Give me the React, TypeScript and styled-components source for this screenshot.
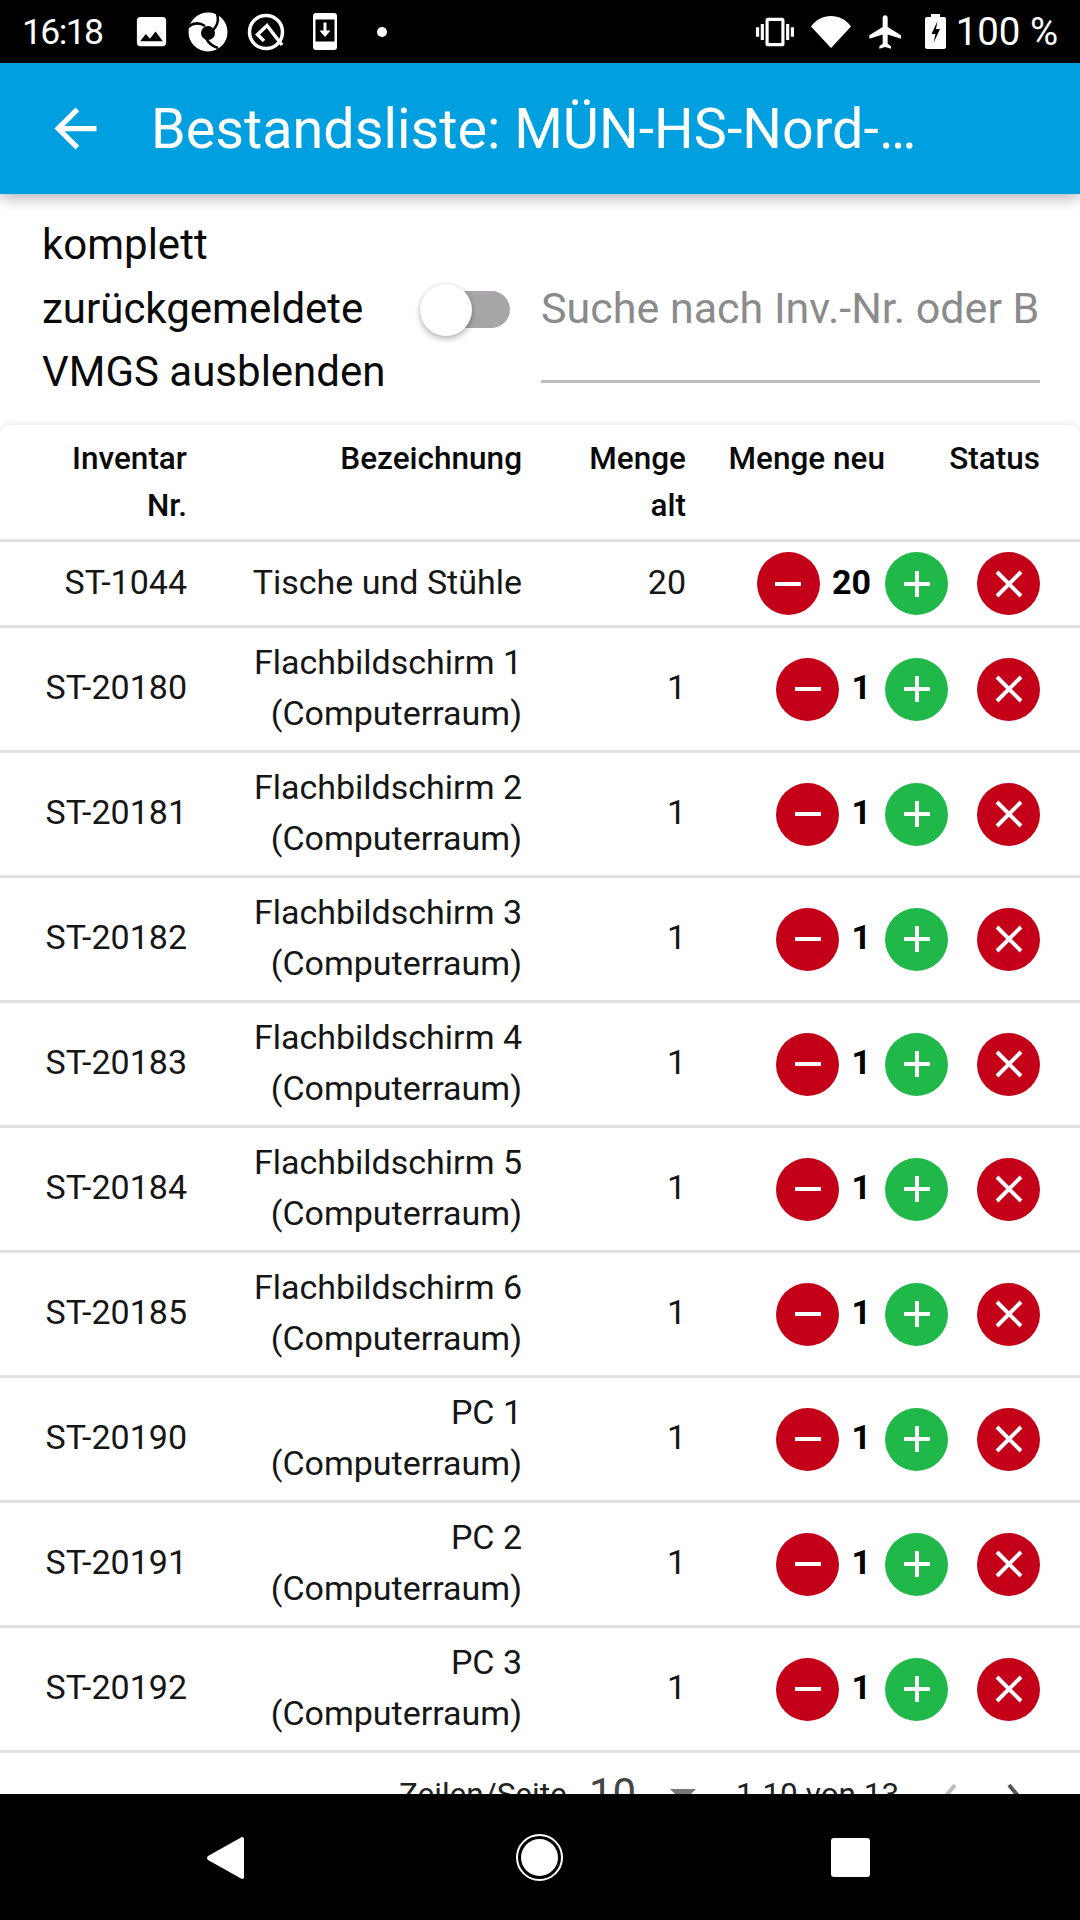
import { createGlobalStyle } from "styled-components";
import styled from "styled-components";

const GlobalStyle = createGlobalStyle`
  html, body {
    margin: 0;
    padding: 0;
    background: #fff;
  }
  * {
    box-sizing: border-box;
  }
`;

const Page = styled.div`
  width: 1080px;
  height: 1920px;
  display: flex;
  flex-direction: column;
  overflow: hidden;
  background: #fff;
  color: #111;
  font-family: Roboto, "Liberation Sans", sans-serif;
`;

const StatusBar = styled.div`
  height: 63px;
  flex: none;
  background: #000;
  color: #fff;
  display: flex;
  align-items: center;
  justify-content: space-between;
  padding: 0 22px 0 22px;
  font-size: 38.4px;
  position: relative;
  z-index: 3;
`;

const StatusGroup = styled.div`
  display: flex;
  align-items: center;
`;

const Clock = styled.span`
  width: 110px;
  font-size: 35.5px;
  letter-spacing: -1.6px;
`;

const Glyph = styled.svg<{ $gap?: number }>`
  display: block;
  flex: none;
  margin-right: ${(p) => p.$gap ?? 0}px;
  fill: #fff;
`;

const AppBar = styled.header`
  height: 131px;
  flex: none;
  background: #009fe0;
  color: #fff;
  display: flex;
  align-items: center;
  padding-left: 44px;
  gap: 44px;
  font-size: 55.7px;
  box-shadow: 0 4px 14px rgba(0, 0, 0, 0.3);
  position: relative;
  z-index: 2;
`;

const Content = styled.main`
  flex: 1;
  min-height: 0;
  overflow: hidden;
`;

const Filters = styled.section`
  height: 231px;
  display: flex;
  padding: 19px 40px 0 42px;
`;

const FilterLabel = styled.div`
  width: 379px;
  font-size: 42px;
  line-height: 63.5px;
  color: #0a0a0a;
`;

const SwitchTrack = styled.div`
  width: 89px;
  height: 37px;
  margin: 78px 31px 0 0;
  border-radius: 19px;
  background: #a8a6a8;
  position: relative;
`;

const SwitchThumb = styled.span`
  position: absolute;
  left: -1px;
  top: -7px;
  width: 52px;
  height: 52px;
  border-radius: 50%;
  background: #fff;
  box-shadow: 0 3px 6px rgba(0, 0, 0, 0.28), 0 0 3px rgba(0, 0, 0, 0.1);
`;

const SearchField = styled.div`
  flex: 1;
  height: 172px;
  margin-top: -2px;
  border-bottom: 3px solid #bdbdbd;
  overflow: hidden;
  white-space: nowrap;
  font-size: 43px;
  line-height: 63.5px;
  padding-top: 66px;
  color: #8b8b8b;
`;

const TableCard = styled.section`
  border-radius: 10px 10px 0 0;
  box-shadow: 0 -1px 6px rgba(0, 0, 0, 0.1);
`;

const Row = styled.div<{ $height: number }>`
  height: ${(p) => p.$height}px;
  display: grid;
  grid-template-columns: 187px 335px 164px 262px 92px;
  align-items: center;
  padding-bottom: 3px;
  border-bottom: 3px solid #e0e0e0;
  text-align: right;
  font-size: 34px;
  line-height: 51px;
`;

const HeaderCell = styled.div<{ $inset?: number }>`
  align-self: start;
  padding-top: 10px;
  padding-right: ${(p) => p.$inset ?? 0}px;
  font-size: 31.5px;
  font-weight: 500;
  line-height: 47px;
  color: #0a0a0a;
`;

const Cell = styled.div`
  color: #161616;
`;

const QtyCell = styled.div`
  display: flex;
  justify-content: flex-end;
  align-items: center;
  margin-top: 3px;
`;

const Qty = styled.span`
  margin: -3px 14px 0 12px;
  font-weight: 700;
  color: #000;
`;

const RoundButton = styled.button<{ $tone: "red" | "green" }>`
  width: 63px;
  height: 63px;
  padding: 0;
  border: none;
  border-radius: 50%;
  display: flex;
  align-items: center;
  justify-content: center;
  flex: none;
  background: ${(p) => (p.$tone === "red" ? "#c40018" : "#21b84a")};
`;

const StatusCell = styled.div`
  display: flex;
  justify-content: flex-end;
  margin-top: 3px;
`;

const ButtonIcon = styled.svg`
  display: block;
  stroke: #fff;
  stroke-width: 4;
  fill: none;
`;

const Pagination = styled.footer`
  height: 120px;
  display: flex;
  align-items: flex-start;
  padding: 23px 0 0 399px;
  font-size: 31.5px;
  color: #222;
`;

const PerPageLabel = styled.span`
  width: 190px;
`;

const PerPageValue = styled.span`
  width: 81px;
  margin-top: -7px;
  font-size: 42px;
  color: #444;
`;

const Caret = styled.span`
  width: 0;
  height: 0;
  margin: 13px 40px 0 0;
  border-left: 13px solid transparent;
  border-right: 13px solid transparent;
  border-top: 13px solid #777;
`;

const PageRange = styled.span`
  width: 207px;
`;

const PageChevron = styled.svg<{ $gap?: number }>`
  display: block;
  margin: 7px ${(p) => p.$gap ?? 0}px 0 0;
  fill: none;
  stroke-width: 4;
`;

const NavBar = styled.nav`
  height: 126px;
  flex: none;
  background: #000;
  display: grid;
  grid-template-columns: 207px 37px 272px 47px 268px 39px;
  align-items: center;
  padding-top: 1px;
`;

const NavHome = styled.span`
  grid-column: 4;
  width: 47px;
  height: 47px;
  border-radius: 50%;
  border: 2px solid #fff;
  padding: 3px;
  display: block;
  &::after {
    content: "";
    display: block;
    width: 100%;
    height: 100%;
    border-radius: 50%;
    background: #fff;
  }
`;

const NavSquare = styled.span`
  grid-column: 6;
  width: 39px;
  height: 39px;
  border-radius: 3px;
  background: #fff;
`;

const NavBack = styled.svg`
  grid-column: 2;
  display: block;
  fill: #fff;
`;

type Item = { id: string; name: string[]; qty: number };

const items: Item[] = [
  { id: "ST-1044", name: ["Tische und Stühle"], qty: 20 },
  { id: "ST-20180", name: ["Flachbildschirm 1", "(Computerraum)"], qty: 1 },
  { id: "ST-20181", name: ["Flachbildschirm 2", "(Computerraum)"], qty: 1 },
  { id: "ST-20182", name: ["Flachbildschirm 3", "(Computerraum)"], qty: 1 },
  { id: "ST-20183", name: ["Flachbildschirm 4", "(Computerraum)"], qty: 1 },
  { id: "ST-20184", name: ["Flachbildschirm 5", "(Computerraum)"], qty: 1 },
  { id: "ST-20185", name: ["Flachbildschirm 6", "(Computerraum)"], qty: 1 },
  { id: "ST-20190", name: ["PC 1", "(Computerraum)"], qty: 1 },
  { id: "ST-20191", name: ["PC 2", "(Computerraum)"], qty: 1 },
  { id: "ST-20192", name: ["PC 3", "(Computerraum)"], qty: 1 },
];

const MinusIcon = () => (
  <ButtonIcon width="28" height="28" viewBox="0 0 28 28">
    <path d="M1 14h26" />
  </ButtonIcon>
);

const PlusIcon = () => (
  <ButtonIcon width="28" height="28" viewBox="0 0 28 28">
    <path d="M1 14h26M14 1v26" />
  </ButtonIcon>
);

const CloseIcon = () => (
  <ButtonIcon width="28" height="28" viewBox="0 0 28 28">
    <path d="M2 2l24 24M26 2L2 26" />
  </ButtonIcon>
);

const ImageGlyph = () => (
  <Glyph width="39" height="39" viewBox="0 0 24 24" $gap={17}>
    <path d="M21 19V5c0-1.100-.9-2-2-2H5c-1.100 0-2 .9-2 2v14c0 1.100.9 2 2 2h14c1.100 0 2-.9 2-2zM8.500 13.500l2.500 3.010L14.500 12l4.500 6H5l3.500-4.500z" />
  </Glyph>
);

const ShutterGlyph = () => (
  <Glyph width="40" height="40" viewBox="0 0 40 40" $gap={19}>
    <circle cx="20" cy="20" r="19.500" />
    <circle cx="20" cy="21" r="7" fill="#000" />
    <path
      d="M29 2c2 6 1 11-4 16M0 15c5-4 11-5 17-1M30 36c-6-2-10-5-12-10"
      fill="none"
      stroke="#000"
      strokeWidth="2.500"
    />
  </Glyph>
);

const RingGlyph = () => (
  <Glyph width="38" height="38" viewBox="0 0 38 38" $gap={28}>
    <circle cx="19" cy="19" r="16.500" fill="none" stroke="#fff" strokeWidth="3.500" />
    <path d="M17 28L10.500 21.500 20 12.500 35 32" fill="none" stroke="#fff" strokeWidth="3.500" />
  </Glyph>
);

const PhoneGlyph = () => (
  <Glyph width="24" height="37" viewBox="0 0 24 37" $gap={40}>
    <rect width="24" height="37" rx="3" />
    <rect x="2.500" y="6.500" width="19" height="22" fill="#000" />
    <path d="M10.500 9.500h3v8h4L12 24l-5.500-6.500h4z" />
  </Glyph>
);

const VibrateGlyph = () => (
  <Glyph width="38" height="38" viewBox="0 0 24 24" $gap={17}>
    <path d="M0 15h2V9H0v6zm3 2h2V7H3v10zm19-8v6h2V9h-2zm-3 8h2V7h-2v10zM16.500 3h-9C6.670 3 6 3.670 6 4.500v15c0 .83.670 1.500 1.500 1.500h9c.83 0 1.500-.67 1.500-1.500v-15c0-.83-.67-1.500-1.500-1.500zM16 19H8V5h8v14z" />
  </Glyph>
);

const WifiGlyph = () => (
  <Glyph width="40" height="33" viewBox="0 0 40 33" $gap={15}>
    <path d="M0 11.500C5 4.500 12 1 20 1s15 3.500 20 10.500L20 33z" />
  </Glyph>
);

const PlaneGlyph = () => (
  <Glyph width="40" height="40" viewBox="0 0 24 24" $gap={19}>
    <path d="M21 16v-2l-8-5V3.500c0-.83-.67-1.500-1.500-1.500S10 2.670 10 3.500V9l-8 5v2l8-2.500V19l-2 1.500V22l3.500-1 3.500 1v-1.500L13 19v-5.500l8 2.500z" />
  </Glyph>
);

const BatteryGlyph = () => (
  <Glyph width="21" height="35" viewBox="0 0 21 35" $gap={10}>
    <path d="M6 0h9v3h4c1.100 0 2 .9 2 2v28c0 1.100-.9 2-2 2H2c-1.100 0-2-.9-2-2V5c0-1.100.9-2 2-2h4z" />
    <path d="M12.500 7L6.500 20h4l-2 9L15 15h-4z" fill="#000" />
  </Glyph>
);

const App = () => {
  return (
    <Page>
      <GlobalStyle />
      <StatusBar>
        <StatusGroup>
          <Clock>16:18</Clock>
          <ImageGlyph />
          <ShutterGlyph />
          <RingGlyph />
          <PhoneGlyph />
          <Glyph width="10" height="10" viewBox="0 0 10 10">
            <circle cx="5" cy="5" r="5" />
          </Glyph>
        </StatusGroup>
        <StatusGroup>
          <VibrateGlyph />
          <WifiGlyph />
          <PlaneGlyph />
          <BatteryGlyph />
          <span>100 %</span>
        </StatusGroup>
      </StatusBar>

      <AppBar>
        <Glyph width="63" height="63" viewBox="0 0 24 24">
          <path d="M20 11H7.830l5.590-5.590L12 4l-8 8 8 8 1.410-1.410L7.830 13H20v-2z" />
        </Glyph>
        <span>Bestandsliste: MÜN-HS-Nord-…</span>
      </AppBar>

      <Content>
        <Filters>
          <FilterLabel>
            komplett
            <br />
            zurückgemeldete
            <br />
            VMGS ausblenden
          </FilterLabel>
          <SwitchTrack>
            <SwitchThumb />
          </SwitchTrack>
          <SearchField>Suche nach Inv.-Nr. oder Bezeichnung</SearchField>
        </Filters>

        <TableCard>
          <Row $height={117}>
            <HeaderCell>
              Inventar
              <br />
              Nr.
            </HeaderCell>
            <HeaderCell>Bezeichnung</HeaderCell>
            <HeaderCell>
              Menge
              <br />
              alt
            </HeaderCell>
            <HeaderCell $inset={63}>Menge neu</HeaderCell>
            <HeaderCell>Status</HeaderCell>
          </Row>

          {items.map((item, index) => (
            <Row key={item.id} $height={index === 0 ? 86 : 125}>
              <Cell>{item.id}</Cell>
              <Cell>
                {item.name.map((line) => (
                  <div key={line}>{line}</div>
                ))}
              </Cell>
              <Cell>{item.qty}</Cell>
              <QtyCell>
                <RoundButton $tone="red">
                  <MinusIcon />
                </RoundButton>
                <Qty>{item.qty}</Qty>
                <RoundButton $tone="green">
                  <PlusIcon />
                </RoundButton>
              </QtyCell>
              <StatusCell>
                <RoundButton $tone="red">
                  <CloseIcon />
                </RoundButton>
              </StatusCell>
            </Row>
          ))}

          <Pagination>
            <PerPageLabel>Zeilen/Seite</PerPageLabel>
            <PerPageValue>10</PerPageValue>
            <Caret />
            <PageRange>1-10 von 13</PageRange>
            <PageChevron width="14" height="28" viewBox="0 0 14 28" stroke="#bdbdbd" $gap={50}>
              <path d="M12 2L2 14l10 12" />
            </PageChevron>
            <PageChevron width="14" height="28" viewBox="0 0 14 28" stroke="#555">
              <path d="M2 2l10 12L2 26" />
            </PageChevron>
          </Pagination>
        </TableCard>
      </Content>

      <NavBar>
        <NavBack width="37" height="42" viewBox="0 0 37 42">
          <path d="M34 .5c1.500-1 3-.3 3 1.500v38c0 1.800-1.500 2.500-3 1.500L1 23c-1.300-1-1.300-3 0-4z" />
        </NavBack>
        <NavHome />
        <NavSquare />
      </NavBar>
    </Page>
  );
};

export default App;
